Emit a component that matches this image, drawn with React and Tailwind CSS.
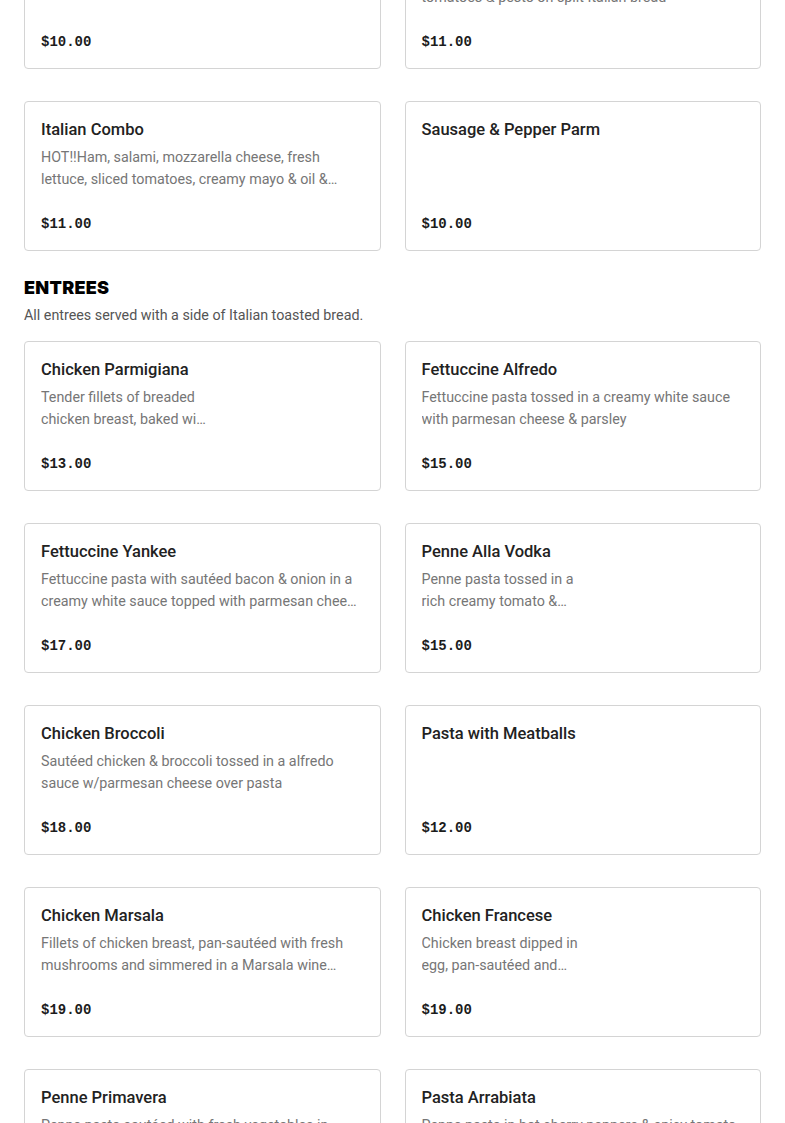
import React from "react";

const earlier = [
    { name: "Chicken Cutlet", desc: "", price: "$10.00" },
    {
        name: "Chicken Pesto",
        desc: "Grilled chicken cutlet, fresh mozzarella cheese, tomatoes & pesto on split Italian bread",
        price: "$11.00",
    },
    {
        name: "Italian Combo",
        desc: "HOT!!Ham, salami, mozzarella cheese, fresh lettuce, sliced tomatoes, creamy mayo & oil & vinegar on a hero",
        price: "$11.00",
    },
    { name: "Sausage & Pepper Parm", desc: "", price: "$10.00" },
];

const entrees = [
    {
        name: "Chicken Parmigiana",
        desc: "Tender fillets of breaded chicken breast, baked with marinara sauce & melted mozzarella",
        price: "$13.00",
        narrow: true,
    },
    {
        name: "Fettuccine Alfredo",
        desc: "Fettuccine pasta tossed in a creamy white sauce with parmesan cheese & parsley",
        price: "$15.00",
    },
    {
        name: "Fettuccine Yankee",
        desc: "Fettuccine pasta with sautéed bacon & onion in a creamy white sauce topped with parmesan cheese & parsley",
        price: "$17.00",
    },
    {
        name: "Penne Alla Vodka",
        desc: "Penne pasta tossed in a rich creamy tomato & vodka sauce",
        price: "$15.00",
        narrow: true,
    },
    {
        name: "Chicken Broccoli",
        desc: "Sautéed chicken & broccoli tossed in a alfredo sauce w/parmesan cheese over pasta",
        price: "$18.00",
    },
    { name: "Pasta with Meatballs", desc: "", price: "$12.00" },
    {
        name: "Chicken Marsala",
        desc: "Fillets of chicken breast, pan-sautéed with fresh mushrooms and simmered in a Marsala wine sauce, served over pasta",
        price: "$19.00",
    },
    {
        name: "Chicken Francese",
        desc: "Chicken breast dipped in egg, pan-sautéed and simmered in a lemon butter sauce",
        price: "$19.00",
        narrow: true,
    },
    {
        name: "Penne Primavera",
        desc: "Penne pasta sautéed with fresh vegetables in garlic & oil",
        price: "$16.00",
    },
    {
        name: "Pasta Arrabiata",
        desc: "Penne pasta in hot cherry peppers & spicy tomato sauce",
        price: "$15.00",
    },
];

const ItemCard = ({ item }) => (
    <div className="h-[150px] flex flex-col justify-between border border-[#d4d4d4] rounded-[4px] bg-white px-4 pt-4 pb-4">
        <div>
            <h3 className="text-[16.5px] leading-6 font-medium text-[#222]">{item.name}</h3>
            {item.desc && (
                <p
                    className={`mt-1 text-[14.3px] leading-[22px] text-[#767676] line-clamp-2 ${
                        item.narrow ? "max-w-[168px]" : ""
                    }`}
                >
                    {item.desc}
                </p>
            )}
        </div>
        <div className="font-['Liberation_Mono',monospace] font-bold text-[14px] leading-5 text-[#1c1c1c]">
            {item.price}
        </div>
    </div>
);

export default function App() {
    return (
        <div className="bg-white min-h-screen px-6 font-['Roboto',sans-serif] overflow-hidden">
            {/* list is scrolled: first row starts above the viewport */}
            <div className="-mt-[81px] grid grid-cols-2 gap-x-6 gap-y-8">
                {earlier.map((item) => (
                    <ItemCard key={item.name} item={item} />
                ))}
            </div>

            <section className="mt-[25px]">
                <h2 className="font-['Inter',sans-serif] text-[18px] leading-6 font-black tracking-[0.3px] text-black">
                    ENTREES
                </h2>
                <p className="mt-[5px] text-[14.3px] leading-5 text-[#555]">
                    All entrees served with a side of Italian toasted bread.
                </p>
                <div className="mt-4 grid grid-cols-2 gap-x-6 gap-y-8 pb-10">
                    {entrees.map((item) => (
                        <ItemCard key={item.name} item={item} />
                    ))}
                </div>
            </section>
        </div>
    );
}
